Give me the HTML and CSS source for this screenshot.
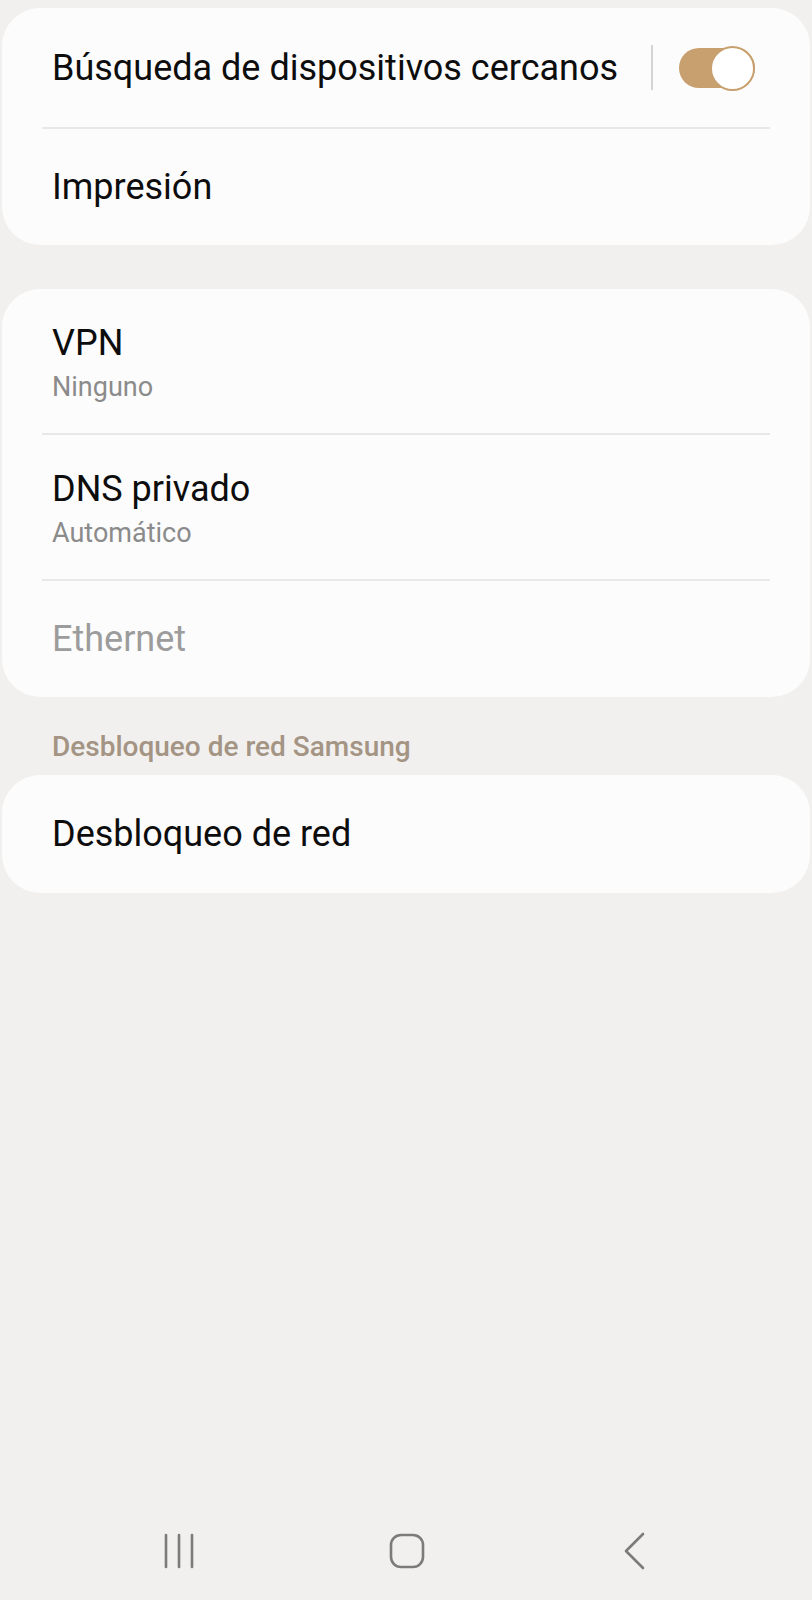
FILE: index.html
```html
<!DOCTYPE html>
<html lang="es">
<head>
<meta charset="utf-8">
<title>Conexiones</title>
<link rel="stylesheet" href="styles.css">
</head>
<body>
<div class="screen">
  <section class="card card-first">
    <div class="row row-toggle">
      <span class="title">Búsqueda de dispositivos cercanos</span>
      <span class="vsep"></span>
      <span class="toggle"><span class="thumb"></span></span>
    </div>
    <div class="divider"></div>
    <div class="row row-short">
      <span class="title">Impresión</span>
    </div>
  </section>

  <section class="card card-gap">
    <div class="row row-two">
      <span class="title">VPN</span>
      <span class="sub">Ninguno</span>
    </div>
    <div class="divider"></div>
    <div class="row row-two">
      <span class="title">DNS privado</span>
      <span class="sub">Automático</span>
    </div>
    <div class="divider"></div>
    <div class="row row-short">
      <span class="title disabled">Ethernet</span>
    </div>
  </section>

  <h2 class="section-header">Desbloqueo de red Samsung</h2>

  <section class="card">
    <div class="row">
      <span class="title">Desbloqueo de red</span>
    </div>
  </section>

  <nav class="navbar">
    <span class="nav-slot">
      <svg width="34" height="36" viewBox="0 0 34 36" fill="none" stroke="#7b7b7b" stroke-width="2.6" stroke-linecap="round">
        <line x1="4" y1="2" x2="4" y2="34"/>
        <line x1="17" y1="2" x2="17" y2="34"/>
        <line x1="30" y1="2" x2="30" y2="34"/>
      </svg>
    </span>
    <span class="nav-slot">
      <svg width="36" height="36" viewBox="0 0 36 36" fill="none" stroke="#7b7b7b" stroke-width="2.6">
        <rect x="2" y="2" width="32" height="32" rx="10" ry="10"/>
      </svg>
    </span>
    <span class="nav-slot">
      <svg width="24" height="38" viewBox="0 0 24 38" fill="none" stroke="#7b7b7b" stroke-width="2.6" stroke-linecap="round" stroke-linejoin="round">
        <polyline points="20,2 3,19 20,36"/>
      </svg>
    </span>
  </nav>
</div>
</body>
</html>
```

FILE: styles.css
```css
* { box-sizing: border-box; }

html, body {
  margin: 0;
  padding: 0;
  background: #f1f0ee;
}

body {
  font-family: Roboto, "Noto Sans", "Liberation Sans", sans-serif;
  color: #0d0d0d;
}

.screen {
  width: 812px;
  min-height: 1600px;
  display: flex;
  flex-direction: column;
  padding: 8px 2px 0 2px;
}

.card {
  background: #fcfcfc;
  border-radius: 38px;
  display: flex;
  flex-direction: column;
}

.card-gap {
  margin-top: 44px;
}

.row {
  height: 118px;
  display: flex;
  align-items: center;
  padding: 0 55px 0 50px;
}

.row-toggle {
  height: 119px;
}

.row-short {
  height: 116px;
}

.row-two {
  height: 144px;
  flex-direction: column;
  align-items: flex-start;
  justify-content: center;
  gap: 8px;
  padding-top: 3px;
}

.title {
  font-size: 36px;
  line-height: 40px;
}

.title.disabled {
  color: #9c9c9c;
}

.sub {
  font-size: 27px;
  line-height: 32px;
  color: #8b8b8b;
}

.divider {
  height: 2px;
  background: #e9e8e6;
  margin: 0 40px;
}

.vsep {
  margin-left: auto;
  width: 2px;
  height: 45px;
  background: #d6d5d3;
  margin-right: 26px;
}

.toggle {
  position: relative;
  flex: none;
  width: 76px;
  height: 40px;
  border-radius: 20px;
  background: #c8a06f;
}

.thumb {
  position: absolute;
  right: 0;
  top: -2px;
  width: 45px;
  height: 45px;
  border-radius: 50%;
  background: #ffffff;
  border: 2.5px solid #c8a06f;
}

.section-header {
  margin: 0;
  height: 78px;
  display: flex;
  align-items: flex-end;
  padding: 0 0 12px 50px;
  font-size: 28px;
  line-height: 32px;
  font-weight: 500;
  color: #a49484;
}

.navbar {
  margin-top: auto;
  height: 98px;
  display: flex;
  justify-content: center;
  align-items: center;
  gap: 180px;
  padding-left: 2px;
}

.nav-slot {
  width: 48px;
  display: flex;
  justify-content: center;
  align-items: center;
}

.nav-slot svg {
  display: block;
}
```
